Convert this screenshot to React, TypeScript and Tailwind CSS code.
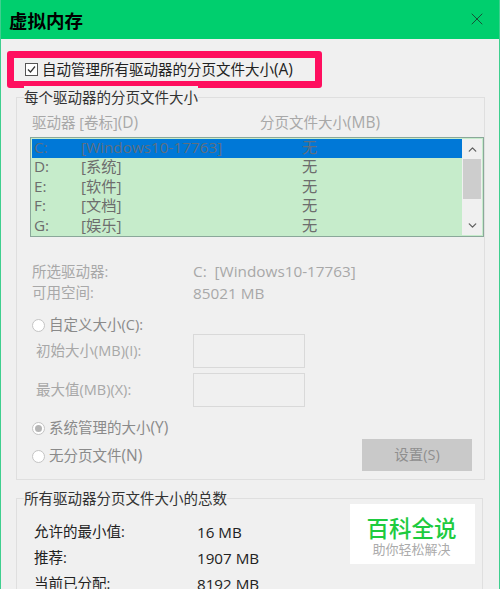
import { X, ChevronUp, ChevronDown } from "lucide-react";

const drives = [
  { letter: "C:", label: "[Windows10-17763]", size: "无" },
  { letter: "D:", label: "[系统]", size: "无" },
  { letter: "E:", label: "[软件]", size: "无" },
  { letter: "F:", label: "[文档]", size: "无" },
  { letter: "G:", label: "[娱乐]", size: "无" },
];

const totals = [
  { label: "允许的最小值:", value: "16 MB" },
  { label: "推荐:", value: "1907 MB" },
  { label: "当前已分配:", value: "8192 MB" },
];

function Radio({ checked = false }: { checked?: boolean }) {
  return (
    <span className="flex size-[13px] shrink-0 items-center justify-center rounded-full border border-[#c4c4c4] bg-white">
      {checked && <span className="size-[7px] rounded-full bg-[#b5b5b5]" />}
    </span>
  );
}

function DriveRow({ drive, selected }: { drive: (typeof drives)[number]; selected: boolean }) {
  return (
    <div
      className={`flex h-[19.4px] items-center pb-[2px] text-[15.3px] leading-none ${
        selected ? "bg-[#0078d7] text-[#5f6f80]" : "text-[#6d6d6d]"
      }`}
    >
      <span className="w-[49px] pl-[2px]">{drive.letter}</span>
      <span className="w-[221px]">{drive.label}</span>
      <span>{drive.size}</span>
    </div>
  );
}

export default function App() {
  return (
    <div className="relative h-[589px] w-[500px] overflow-hidden border-x border-[#3fcf8f] bg-[#f0f0f0] text-[14.5px] font-['Open_Sans','Noto_Sans_CJK_SC',sans-serif]">
      <div className="-mx-px flex h-[39px] items-center justify-between bg-[#00cf6e] pl-[9px] pr-[13px] pt-[2px]">
        <h1 className="text-[18.5px] font-bold text-black">虚拟内存</h1>
        <X className="-mt-[4px] size-[20px] text-[#1c3a2c]" strokeWidth={1} absoluteStrokeWidth />
      </div>

      <div className="ml-[6px] mt-[12px] flex h-[37px] w-[315px] items-center rounded-[3px] border-[7px] border-[#ff0f5f] pl-[11px] text-[#222]">
        <span className="mr-[4px] flex size-[13px] items-center justify-center border border-[#555] bg-white">
          <svg viewBox="0 0 11 11" className="size-[11px]" fill="none" stroke="#333" strokeWidth="1.2">
            <path d="M2 5.5 L4.5 8 L9 2.5" />
          </svg>
        </span>
        <span className="whitespace-nowrap">
          自动管理所有驱动器的分页文件大小<span className="text-[15.5px]">(A)</span>
        </span>
      </div>

      <fieldset className="-mt-[2px] ml-[15px] h-[394px] w-[467px] border border-[#dfdfdf] pl-[15px]">
        <legend className="-ml-[8px] bg-[#f0f0f0] pt-[2px] leading-[20px] text-[#333]">每个驱动器的分页文件大小</legend>

        <div className="mt-[5px] flex h-[20px] items-center text-[#a8a8a8]">
          <span className="w-[228px]">
            驱动器 [卷标]<span className="text-[15.5px]">(D)</span>
          </span>
          <span>
            分页文件大小<span className="text-[15.5px]">(MB)</span>
          </span>
        </div>

        <div className="-ml-[2px] mt-[4px] flex h-[100px] w-[454px] border border-[#8aa89a] bg-[#c6eccb] p-px">
          <div className="min-w-0 flex-1">
            {drives.map((drive, i) => (
              <DriveRow key={drive.letter} drive={drive} selected={i === 0} />
            ))}
          </div>
          <div className="flex w-[20px] flex-col items-center bg-[#f0f0f0]">
            <div className="flex h-[20px] items-center">
              <ChevronUp className="size-[13px] text-[#606060]" strokeWidth={2.4} />
            </div>
            <div className="h-[40px] w-[18px] bg-[#cdcdcd]" />
            <div className="mt-auto flex h-[20px] items-center">
              <ChevronDown className="size-[13px] text-[#606060]" strokeWidth={2.4} />
            </div>
          </div>
        </div>

        <div className="mt-[24px] flex h-[21px] items-center text-[#a8a8a8]">
          <span className="w-[161px]">所选驱动器:</span>
          <span className="text-[15.3px]">C:&nbsp;&nbsp;[Windows10-17763]</span>
        </div>
        <div className="flex h-[22px] items-center text-[#a8a8a8]">
          <span className="w-[161px]">可用空间:</span>
          <span className="text-[15.3px]">85021 MB</span>
        </div>

        <div className="mt-[12px] flex h-[18px] items-center gap-[4px] text-[#8a8a8a]">
          <Radio />
          <span>自定义大小(C):</span>
        </div>

        <div className="flex h-[34px] items-center text-[#a8a8a8]">
          <span className="w-[161px] pl-[4px]">初始大小(MB)(I):</span>
          <span className="h-full w-[112px] border border-[#d9d9d9]" />
        </div>
        <div className="mt-[5px] flex h-[34px] items-center text-[#a8a8a8]">
          <span className="w-[161px] pl-[4px]">最大值(MB)(X):</span>
          <span className="h-full w-[112px] border border-[#d9d9d9]" />
        </div>

        <div className="mt-[10px] flex h-[22px] items-center gap-[4px] text-[#8a8a8a]">
          <Radio checked />
          <span>
            系统管理的大小<span className="text-[15.5px]">(Y)</span>
          </span>
        </div>
        <div className="mt-[6px] flex h-[22px] items-center gap-[4px] text-[#8a8a8a]">
          <Radio />
          <span>
            无分页文件<span className="text-[15.5px]">(N)</span>
          </span>
          <button
            type="button"
            className="mb-[3px] ml-auto mr-[12px] flex h-[32px] w-[110px] items-center justify-center bg-[#c9c9c9] text-[#8f8f8f]"
          >
            设置(S)
          </button>
        </div>
      </fieldset>

      <fieldset className="ml-[15px] mt-[7px] h-[121px] w-[467px] border border-[#dfdfdf] pl-[17px]">
        <legend className="-ml-[10px] bg-[#f0f0f0] pt-[2px] leading-[20px] text-[#333]">所有驱动器分页文件大小的总数</legend>
        <div className="mt-[13px] flex flex-col gap-[6px] text-[#222]">
          {totals.map((row) => (
            <div key={row.label} className="flex h-[20px] items-center">
              <span className="w-[163px]">{row.label}</span>
              <span className="text-[15.2px]">{row.value}</span>
            </div>
          ))}
        </div>
      </fieldset>

      <div className="absolute left-[349px] top-[504px] flex h-[60px] w-[125px] flex-col items-center bg-white pr-[2px] pt-[12px]">
        <span className="text-[22.5px] font-medium leading-[26px] text-[#1ecb3f]">百科全说</span>
        <span className="text-[13px] leading-[14px] text-[#ababab]">助你轻松解决</span>
      </div>
    </div>
  );
}
